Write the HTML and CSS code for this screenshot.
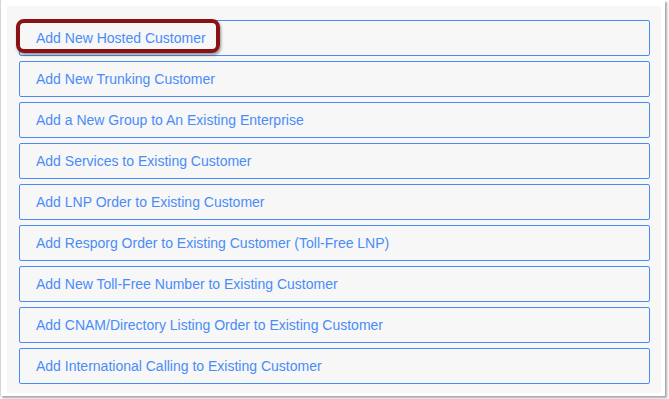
FILE: index.html
```html
<!DOCTYPE html>
<html lang="en">
<head>
    <meta charset="UTF-8">
    <title>Add Customer</title>
    <link rel="stylesheet" href="styles.css">
</head>
<body>
    <div class="frame">
        <div class="panel">
            <div class="list">
                <a class="item" href="#">Add New Hosted Customer</a>
                <a class="item" href="#">Add New Trunking Customer</a>
                <a class="item" href="#">Add a New Group to An Existing Enterprise</a>
                <a class="item" href="#">Add Services to Existing Customer</a>
                <a class="item" href="#">Add LNP Order to Existing Customer</a>
                <a class="item" href="#">Add Resporg Order to Existing Customer (Toll-Free LNP)</a>
                <a class="item" href="#">Add New Toll-Free Number to Existing Customer</a>
                <a class="item" href="#">Add CNAM/Directory Listing Order to Existing Customer</a>
                <a class="item" href="#">Add International Calling to Existing Customer</a>
            </div>
            <!-- callout drawn over the first entry -->
            <div class="callout"></div>
        </div>
    </div>
</body>
</html>
```

FILE: styles.css
```css
html, body {
    margin: 0;
    padding: 0;
    background: #ffffff;
}

body {
    font-family: "Liberation Sans", Arial, sans-serif;
    width: 669px;
    height: 399px;
    overflow: hidden;
}

.frame {
    width: 665px;
    height: 396px;
    box-sizing: border-box;
    padding: 6px 4px 3px 6px;
    background: #ffffff;
    border-left: 1px solid #d6d6d6;
    box-shadow: 2px 2px 2px rgba(0, 0, 0, 0.35);
}

.panel {
    position: relative;
    height: 100%;
    background: #f7f7f7;
    padding: 14px 11px 0 12px;
    box-sizing: border-box;
}

.list {
    display: flex;
    flex-direction: column;
    gap: 5px;
}

.item {
    display: flex;
    align-items: center;
    height: 36px;
    box-sizing: border-box;
    padding: 0 16px;
    border: 1px solid #4a8cf7;
    border-radius: 2px;
    color: #4a8cf7;
    font-size: 14px;
    text-decoration: none;
    background: #f7f7f7;
}

.callout {
    position: absolute;
    left: 9px;
    top: 13px;
    width: 204px;
    height: 34px;
    box-sizing: border-box;
    border: 4px solid #8a1116;
    border-radius: 8px;
    box-shadow: 1px 2px 3px rgba(0, 0, 0, 0.4);
}
```
